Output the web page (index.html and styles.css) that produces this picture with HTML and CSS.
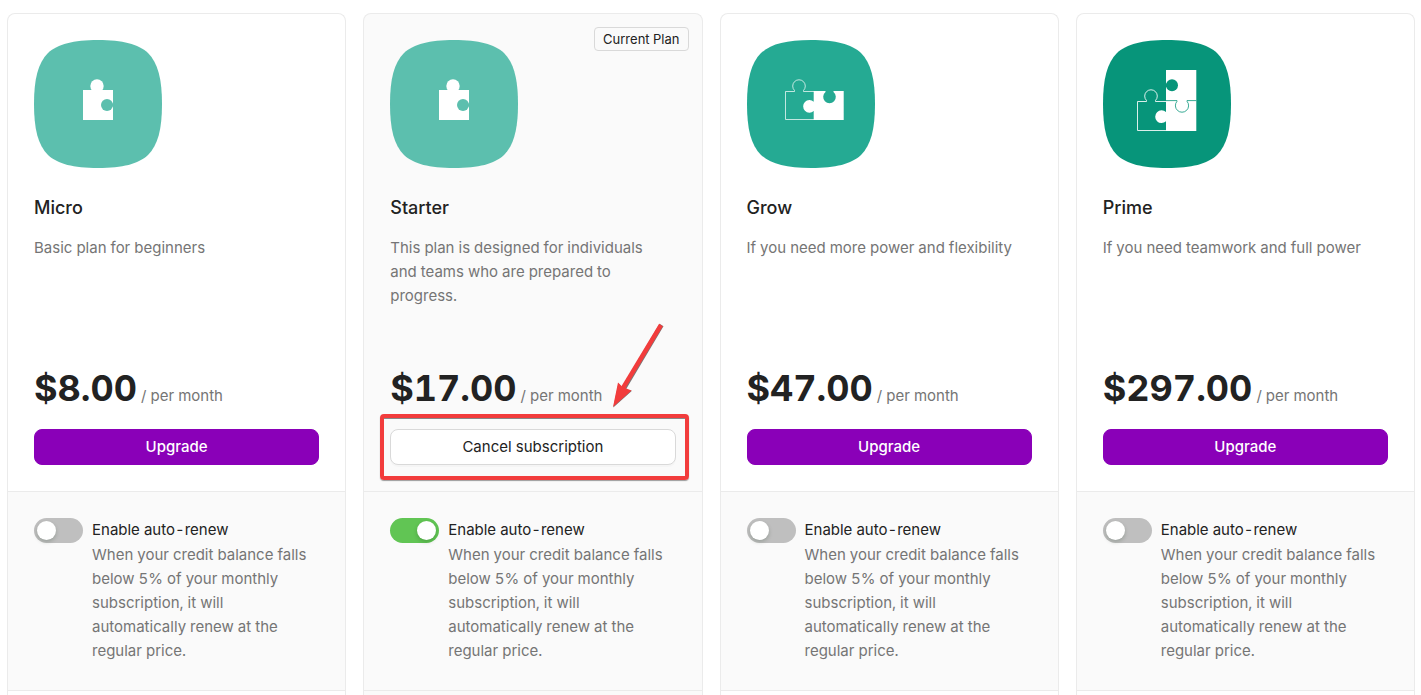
FILE: index.html
```
<!DOCTYPE html>
<html lang="en">
<head>
<meta charset="utf-8">
<title>Subscription plans</title>
<link rel="stylesheet" href="styles.css">
</head>
<body>
<main class="plans">
  <article class="card">
    <section class="plan">
      <svg class="plan-icon" viewBox="0 0 128 128" aria-hidden="true">
        <path fill="#5cbfae" d="M0 64C0 39 4 23 14 13C24 4 39 0 64 0C89 0 104 4 114 13C124 23 128 39 128 64C128 89 124 105 114 115C104 124 89 128 64 128C39 128 24 124 14 115C4 105 0 89 0 64Z"/>
        <path fill="#fff" d="M49 50h30v30h-30z"/><circle cx="63" cy="46" r="6.7" fill="#fff"/>
        <circle cx="73" cy="65" r="6" fill="#5cbfae"/><path fill="#5cbfae" d="M77 63.600h2v2.800h-2z"/>
      </svg>
      <h2 class="name">Micro</h2>
      <p class="about">Basic plan for beginners</p>
      <p class="price"><strong class="amount">$8.00</strong> / per month</p>
      <div class="action"><button class="btn" type="button">Upgrade</button></div>
    </section>
    <section class="renew">
      <input class="toggle" type="checkbox" id="renew-micro">
      <div class="renew-text">
        <label class="renew-label" for="renew-micro">Enable auto-renew</label>
        <p class="renew-note">When your credit balance falls below 5% of your monthly subscription, it will automatically renew at the regular price.</p>
      </div>
    </section>
    <section class="more"></section>
  </article>

  <article class="card card-current">
    <span class="tag">Current Plan</span>
    <section class="plan">
      <svg class="plan-icon" viewBox="0 0 128 128" aria-hidden="true">
        <path fill="#5cbfae" d="M0 64C0 39 4 23 14 13C24 4 39 0 64 0C89 0 104 4 114 13C124 23 128 39 128 64C128 89 124 105 114 115C104 124 89 128 64 128C39 128 24 124 14 115C4 105 0 89 0 64Z"/>
        <path fill="#fff" d="M49 50h30v30h-30z"/><circle cx="63" cy="46" r="6.7" fill="#fff"/>
        <circle cx="73" cy="65" r="6" fill="#5cbfae"/><path fill="#5cbfae" d="M77 63.600h2v2.800h-2z"/>
      </svg>
      <h2 class="name">Starter</h2>
      <p class="about">This plan is designed for individuals and teams who are prepared to progress.</p>
      <p class="price"><strong class="amount">$17.00</strong> / per month</p>
      <div class="action">
        <button class="btn btn-outline" type="button">Cancel subscription</button>
        <span class="highlight"></span>
        <svg class="arrow" viewBox="0 0 52 86" aria-hidden="true">
          <path d="M49.500 2L11.500 66" stroke="#777" stroke-width="4.600" fill="none"/>
          <path d="M1.300 84.500L6.500 60L11.500 66.500L20 67.800Z" fill="#777"/>
          <path d="M49 2L11 65" stroke="#f23c3c" stroke-width="4.400" fill="none"/>
          <path d="M1 84L6 59.500L10.500 64L19.500 67.500Z" fill="#f23c3c"/>
        </svg>
      </div>
    </section>
    <section class="renew">
      <input class="toggle" type="checkbox" id="renew-starter" checked>
      <div class="renew-text">
        <label class="renew-label" for="renew-starter">Enable auto-renew</label>
        <p class="renew-note">When your credit balance falls below 5% of your monthly subscription, it will automatically renew at the regular price.</p>
      </div>
    </section>
    <section class="more"></section>
  </article>

  <article class="card">
    <section class="plan">
      <svg class="plan-icon" viewBox="0 0 128 128" aria-hidden="true">
        <path fill="#25aa93" d="M0 64C0 39 4 23 14 13C24 4 39 0 64 0C89 0 104 4 114 13C124 23 128 39 128 64C128 89 124 105 114 115C104 124 89 128 64 128C39 128 24 124 14 115C4 105 0 89 0 64Z"/>
        <path fill="none" stroke="#fff" stroke-opacity=".8" stroke-width=".9" d="M67 51.500H56.500V50.500A6.300 6.300 0 1 0 47.500 50.500V51.500H38.500V79.500H67"/>
        <path fill="#fff" d="M66.700 51H78.500V52A6.300 6.300 0 1 0 86.500 52V51H96.700V80H66.700V71A6.300 6.300 0 1 1 66.700 61.700Z"/>
      </svg>
      <h2 class="name">Grow</h2>
      <p class="about">If you need more power and flexibility</p>
      <p class="price"><strong class="amount">$47.00</strong> / per month</p>
      <div class="action"><button class="btn" type="button">Upgrade</button></div>
    </section>
    <section class="renew">
      <input class="toggle" type="checkbox" id="renew-grow">
      <div class="renew-text">
        <label class="renew-label" for="renew-grow">Enable auto-renew</label>
        <p class="renew-note">When your credit balance falls below 5% of your monthly subscription, it will automatically renew at the regular price.</p>
      </div>
    </section>
    <section class="more"></section>
  </article>

  <article class="card">
    <section class="plan">
      <svg class="plan-icon" viewBox="0 0 128 128" aria-hidden="true">
        <path fill="#07957a" d="M0 64C0 39 4 23 14 13C24 4 39 0 64 0C89 0 104 4 114 13C124 23 128 39 128 64C128 89 124 105 114 115C104 124 89 128 64 128C39 128 24 124 14 115C4 105 0 89 0 64Z"/>
        <path fill="none" stroke="#fff" stroke-opacity=".85" d="M63 61.500H52.500V60.500A6.300 6.300 0 1 0 43.500 60.500V61.500H34.500V90.500H63"/>
        <path fill="#fff" d="M63 30H93.300V91H63V81.300A6.400 6.400 0 1 1 63 72V47.500V43Z"/>
        <circle cx="69" cy="45.300" r="6" fill="#07957a"/><path fill="#07957a" d="M63 43.500h2v3.500h-2z"/>
        <path fill="none" stroke="#07957a" stroke-width=".8" d="M63 60.600H74V61.300A6.600 6.600 0 1 0 84 61.300V60.600H93.300"/>
      </svg>
      <h2 class="name">Prime</h2>
      <p class="about">If you need teamwork and full power</p>
      <p class="price"><strong class="amount">$297.00</strong> / per month</p>
      <div class="action"><button class="btn" type="button">Upgrade</button></div>
    </section>
    <section class="renew">
      <input class="toggle" type="checkbox" id="renew-prime">
      <div class="renew-text">
        <label class="renew-label" for="renew-prime">Enable auto-renew</label>
        <p class="renew-note">When your credit balance falls below 5% of your monthly subscription, it will automatically renew at the regular price.</p>
      </div>
    </section>
    <section class="more"></section>
  </article>
</main>
</body>
</html>
```
FILE: styles.css
```
* {
  box-sizing: border-box;
}

body {
  margin: 0;
  background: #fff;
  color: #222;
  font: 15px/24px Inter, "Liberation Sans", sans-serif;
  font-variant-numeric: tabular-nums;
}

h2,
p {
  margin: 0;
}

.plans {
  display: grid;
  grid-template-columns: repeat(4, minmax(0, 1fr));
  gap: 17px;
  height: 100vh;
  padding: 13px 6px 0 7px;
  overflow: hidden;
}

.card {
  position: relative;
  display: flex;
  flex-direction: column;
  border: 1px solid #ebebeb;
  border-bottom: 0;
  border-radius: 8px 8px 0 0;
  background: #fff;
}

.card-current {
  background: #fafafa;
}

.tag {
  position: absolute;
  top: 13px;
  right: 13px;
  padding: 0 8px;
  border: 1px solid #d9d9d9;
  border-radius: 4px;
  font-size: 13px;
  line-height: 22px;
}

.plan {
  display: flex;
  flex-direction: column;
  padding: 26px;
}

.plan-icon {
  display: block;
  width: 128px;
  height: 128px;
}

.name {
  margin-top: 28px;
  font-size: 18px;
  font-weight: 500;
  line-height: 24px;
}

.about {
  min-height: 120px;
  margin-top: 16px;
  padding-right: 8px;
  color: #757575;
}

.price {
  margin-top: 8px;
  color: #757575;
  line-height: 48px;
}

.amount {
  color: #222;
  font-size: 36px;
  font-weight: 700;
}

.action {
  position: relative;
  margin-top: 9px;
}

.btn {
  display: block;
  width: 100%;
  height: 36px;
  padding: 0;
  border: 1px solid #8a00b8;
  border-radius: 8px;
  background: #8a00b8;
  color: #fff;
  font: 500 15px/24px Inter, "Liberation Sans", sans-serif;
  cursor: pointer;
}

.btn-outline {
  border-color: #d9d9d9;
  background: #fff;
  color: #222;
  font-weight: 400;
  box-shadow: 0 2px 0 rgba(0, 0, 0, 0.02);
}

.highlight {
  position: absolute;
  inset: -15px -13px -15px -10px;
  border: 4px solid #f23c3c;
  border-radius: 4px;
  box-shadow: 0 1px 1px rgba(60, 60, 60, 0.5), inset 0 1px 0 #888;
  pointer-events: none;
}

.arrow {
  position: absolute;
  right: 12px;
  bottom: 56px;
  width: 52px;
  height: 86px;
  pointer-events: none;
}

.renew {
  display: flex;
  gap: 9px;
  padding: 26px 26px 27px;
  border-top: 1px solid #ebebeb;
  background: #fafafa;
}

.toggle {
  flex: none;
  appearance: none;
  width: 49px;
  height: 25px;
  margin: 0;
  padding: 3px;
  border-radius: 13px;
  background: #bfbfbf;
  cursor: pointer;
}

.toggle::before {
  content: "";
  display: block;
  width: 19px;
  height: 19px;
  border-radius: 50%;
  background: #fff;
  box-shadow: 0 2px 4px rgba(0, 35, 11, 0.2);
}

.toggle:checked {
  background: #61c554;
}

.toggle:checked::before {
  margin-left: auto;
}

.renew-label {
  display: block;
}

.renew-note {
  margin-top: 1px;
  color: #757575;
}

.more {
  flex: 1;
  border-top: 1px solid #ebebeb;
}
```
